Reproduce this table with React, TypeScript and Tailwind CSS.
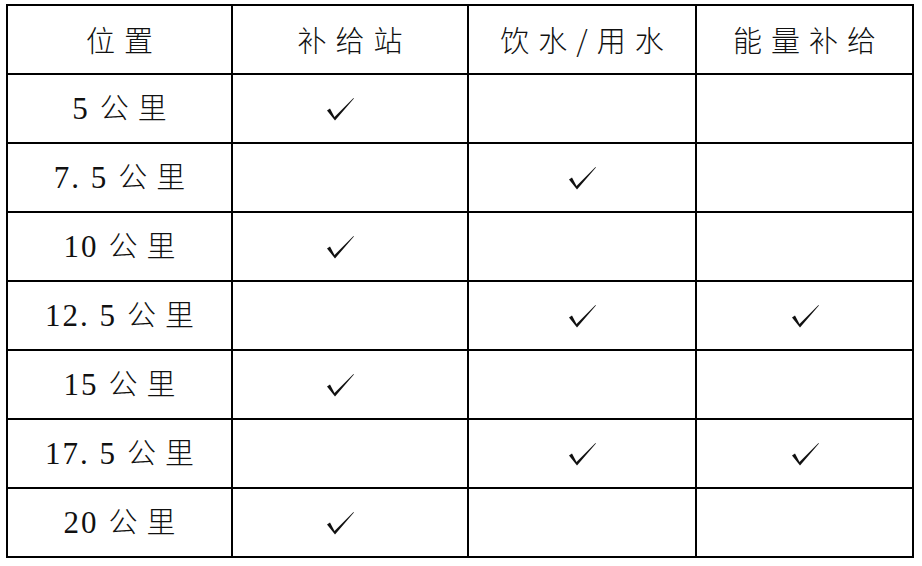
import React from "react";

type Row = { num: string; station: boolean; water: boolean; energy: boolean };

const rows: Row[] = [
  { num: "5", station: true, water: false, energy: false },
  { num: "7. 5", station: false, water: true, energy: false },
  { num: "10", station: true, water: false, energy: false },
  { num: "12. 5", station: false, water: true, energy: true },
  { num: "15", station: true, water: false, energy: false },
  { num: "17. 5", station: false, water: true, energy: true },
  { num: "20", station: true, water: false, energy: false },
];

// thin tick mark like the "√" of a Song font
const Check = () => (
  <svg width="30" height="26" viewBox="0 0 30 26" className="mx-auto block">
    <path d="M2 14.5 L5 12.5 L9.5 21 L28.5 2 L28.9 2.4 L10 24.5 Z" fill="#111" />
  </svg>
);

const cell = "border-2 border-black h-[69px] p-0 text-center align-middle";
const cjk = "font-['Noto_Sans_CJK_SC','Noto_Sans',sans-serif] font-light";

const Head = ({ children }: { children: React.ReactNode }) => (
  <th className={`${cell} ${cjk} text-[29px] tracking-[9px] pl-[9px]`}>{children}</th>
);

export default function App() {
  return (
    <div className="min-h-screen bg-white pt-[4px] pl-[6px] text-[#111]">
      <table className="border-collapse table-fixed w-[906px]">
        <colgroup>
          <col className="w-[225px]" />
          <col className="w-[236px]" />
          <col className="w-[228px]" />
          <col className="w-[217px]" />
        </colgroup>
        <thead>
          <tr>
            <Head>位置</Head>
            <Head>补给站</Head>
            <Head>饮水/用水</Head>
            <Head>能量补给</Head>
          </tr>
        </thead>
        <tbody>
          {rows.map((r) => (
            <tr key={r.num}>
              <td className={cell}>
                <span className="font-['Liberation_Serif','Times_New_Roman',serif] text-[31px] tracking-[2px] whitespace-pre">
                  {r.num}
                </span>
                <span className={`${cjk} ml-[10px] mr-[-9px] text-[29px] tracking-[9px]`}>
                  公里
                </span>
              </td>
              <td className={`${cell} pr-[20px]`}>{r.station && <Check />}</td>
              <td className={cell}>{r.water && <Check />}</td>
              <td className={cell}>{r.energy && <Check />}</td>
            </tr>
          ))}
        </tbody>
      </table>
    </div>
  );
}
